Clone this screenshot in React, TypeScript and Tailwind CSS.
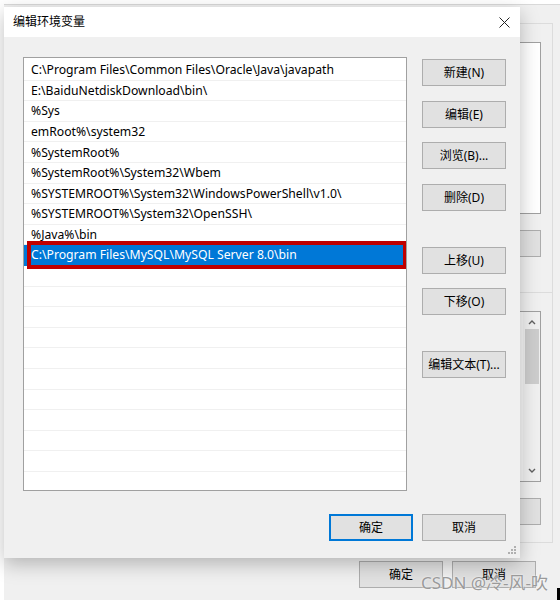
import React from 'react'

const paths = [
  "C:\\Program Files\\Common Files\\Oracle\\Java\\javapath",
  "E:\\BaiduNetdiskDownload\\bin\\",
  "%Sys",
  "emRoot%\\system32",
  "%SystemRoot%",
  "%SystemRoot%\\System32\\Wbem",
  "%SYSTEMROOT%\\System32\\WindowsPowerShell\\v1.0\\",
  "%SYSTEMROOT%\\System32\\OpenSSH\\",
  "%Java%\\bin",
  "C:\\Program Files\\MySQL\\MySQL Server 8.0\\bin",
]

const rows = [...paths, ...Array(11).fill("")]

const font = "font-['Segoe_UI','Noto_Sans','Noto_Sans_CJK_SC',sans-serif]"

const WinButton = ({ label, className = "", focused = false }: { label: string; className?: string; focused?: boolean }) => (
  <div
    className={`w-[84px] h-[27px] flex items-center justify-center bg-[#e1e1e1] text-[12px] text-black ${
      focused ? "border-2 border-[#0078d7]" : "border border-[#adadad]"
    } ${className}`}
  >
    {label}
  </div>
)

const App = () => {
  return (
    <div className={`relative w-[560px] h-[600px] bg-white overflow-hidden ${font}`}>
      {/* window behind the dialog */}
      <div className="absolute left-[4px] top-[4px] right-0 bottom-0 bg-[#f0f0f0] border-t border-[#d9d9d9] flex flex-col items-end pr-[7px]">
        <div className="w-[300px] mt-[18px] h-[270px] border border-[#dcdcdc] flex flex-col items-end pr-[11px] pt-[18px]">
          <div className="w-[280px] h-[172px] bg-white border border-[#a0a0a0]" />
          <div className="w-[84px] h-[27px] mt-[16px] bg-[#e1e1e1] border border-[#adadad]" />
        </div>
        <div className="w-[300px] h-[250px] border border-[#dcdcdc] border-t-0 flex flex-col items-end pr-[11px] pt-[18px]">
          <div className="w-[280px] h-[171px] bg-[#f7f7f7] border border-[#a0a0a0] flex justify-end">
            <div className="w-[17px] h-full flex flex-col items-center bg-[#f0f0f0]">
              <svg width="10" height="14" viewBox="0 0 10 14" className="mt-[3px]">
                <path d="M2 9 L5 6 L8 9" stroke="#606060" strokeWidth="1.4" fill="none" />
              </svg>
              <div className="w-[14px] h-[55px] bg-[#cdcdcd]" />
              <div className="flex-1" />
              <svg width="10" height="14" viewBox="0 0 10 14" className="mb-[3px]">
                <path d="M2 5 L5 8 L8 5" stroke="#606060" strokeWidth="1.4" fill="none" />
              </svg>
            </div>
          </div>
          <div className="w-[84px] h-[27px] mt-[16px] bg-[#e1e1e1] border border-[#adadad]" />
        </div>
        <div className="flex gap-[9px] mt-[18px] mr-[17px]">
          <WinButton label="确定" />
          <WinButton label="取消" />
        </div>
      </div>

      {/* dialog */}
      <div className="absolute left-[4px] top-[7px] w-[516px] h-[551px] bg-[#f0f0f0] shadow-[0_6px_18px_rgba(0,0,0,0.25)] flex flex-col">
        <div className="h-[30px] bg-white flex items-center justify-between pl-[9px] pr-[10px]">
          <span className="text-[12px] text-black">编辑环境变量</span>
          <svg width="11" height="11" viewBox="0 0 11 11">
            <path d="M0.5 0.5 L10.5 10.5 M10.5 0.5 L0.5 10.5" stroke="#222" strokeWidth="1" />
          </svg>
        </div>

        <div className="flex pl-[19px] pt-[20px] gap-[15px]">
          <div className="w-[384px] h-[434px] bg-white border border-[#a0a0a0] pt-[2px] overflow-hidden">
            {rows.map((r, i) => {
              const selected = i === 9
              return (
                <div
                  key={i}
                  className={`relative h-[20.6px] flex items-center pl-[7px] pt-[1px] text-[12.2px] whitespace-nowrap border-b-[1.5px] ${
                    selected ? "bg-[#0078d7] text-white border-[#0078d7]" : "text-black border-[#f0f0f0]"
                  }`}
                >
                  {r}
                  {selected && (
                    <div className="absolute left-[3px] right-[-1px] top-[-4px] bottom-[-4px] border-4 border-[#c00000]" />
                  )}
                </div>
              )
            })}
          </div>

          <div className="flex flex-col pt-[2px]">
            <WinButton label="新建(N)" />
            <WinButton label="编辑(E)" className="mt-[15px]" />
            <WinButton label="浏览(B)..." className="mt-[14px]" />
            <WinButton label="删除(D)" className="mt-[15px]" />
            <WinButton label="上移(U)" className="mt-[36px]" />
            <WinButton label="下移(O)" className="mt-[14px]" />
            <WinButton label="编辑文本(T)..." className="mt-[36px]" />
          </div>
        </div>

        <div className="flex justify-end gap-[9px] pr-[14px] mt-[23px]">
          <WinButton label="确定" focused />
          <WinButton label="取消" />
        </div>

        <svg width="9" height="9" viewBox="0 0 9 9" className="absolute right-[3px] bottom-[3px]">
          <rect x="6" y="0" width="2" height="2" fill="#b0b0b0" />
          <rect x="3" y="3" width="2" height="2" fill="#b0b0b0" />
          <rect x="6" y="3" width="2" height="2" fill="#b0b0b0" />
          <rect x="0" y="6" width="2" height="2" fill="#b0b0b0" />
          <rect x="3" y="6" width="2" height="2" fill="#b0b0b0" />
          <rect x="6" y="6" width="2" height="2" fill="#b0b0b0" />
        </svg>
      </div>

      {/* watermark */}
      <div className="absolute left-[421px] top-[570px] text-[17px] text-[#9a9a9a] [text-shadow:0_0_2px_#ffffff] font-['Noto_Sans','Noto_Sans_CJK_SC',sans-serif]">
        CSDN @冷-风-吹
      </div>
      <div className="absolute left-[557px] top-[588px] w-[3px] h-[12px] bg-black" />
    </div>
  )
}

export default App
